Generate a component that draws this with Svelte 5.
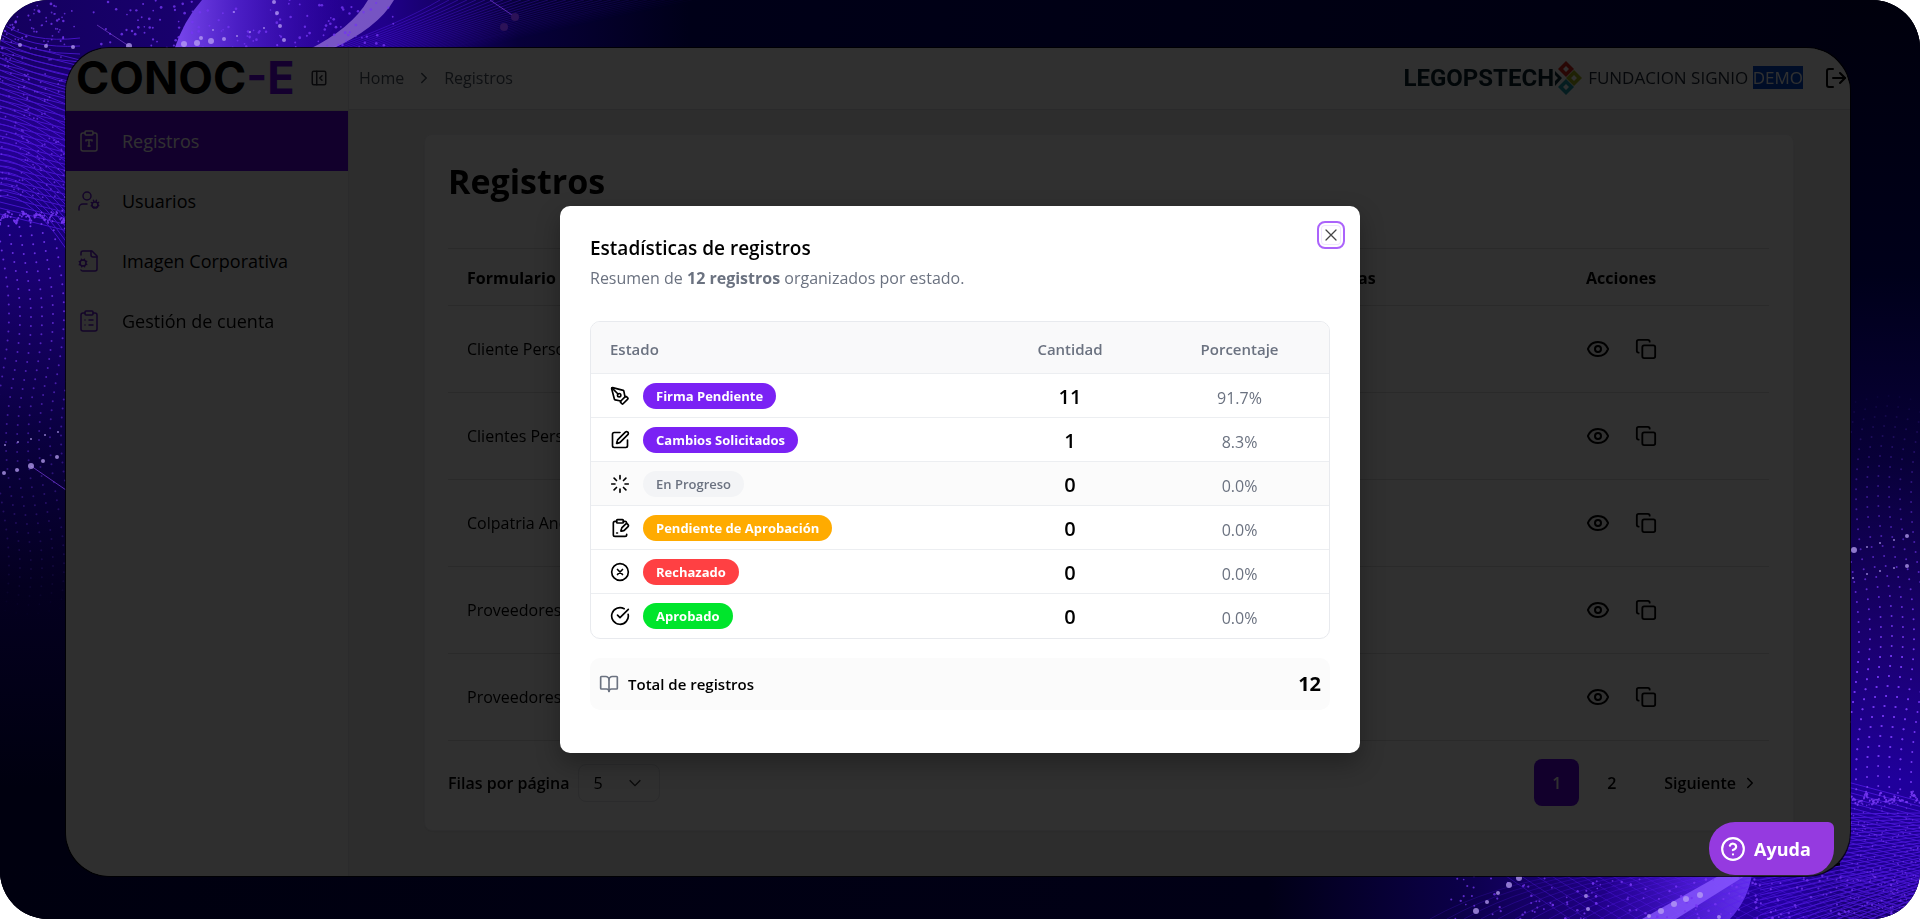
<script lang="ts">
  type Shape = string[];

  const icons: Record<string, Shape> = {
    registros: [
      "M9 2h6a1 1 0 0 1 1 1v2a1 1 0 0 1-1 1H9a1 1 0 0 1-1-1V3a1 1 0 0 1 1-1z",
      "M16 4h2a2 2 0 0 1 2 2v14a2 2 0 0 1-2 2H6a2 2 0 0 1-2-2V6a2 2 0 0 1 2-2h2",
      "M9 12v-1h6v1",
      "M11 17h2",
      "M12 11v6",
    ],
    usuarios: [
      "M6 7a4 4 0 1 0 8 0a4 4 0 1 0-8 0",
      "M10 15H6a4 4 0 0 0-4 4v2",
      "M15 16a3 3 0 1 0 6 0a3 3 0 1 0-6 0",
      "M21.7 16.4l-.9-.3M15.2 13.9l-.9-.3M16.6 18.7l.3-.9M19.1 12.2l.3-.9M19.6 18.7l-.4-1M16.8 12.3l-.4-1M14.3 16.6l1-.4M20.7 13.8l1-.4",
    ],
    imagen: [
      "M14 2v4a2 2 0 0 0 2 2h4",
      "M4 6V4a2 2 0 0 1 2-2h9l5 5v13a2 2 0 0 1-2 2H6a2 2 0 0 1-2-1",
      "M3 14a3 3 0 1 0 6 0a3 3 0 1 0-6 0",
      "M3.2 12.9l-.9-.3M9.7 15.4l-.9-.3M4.6 17.7l.3-.9M7.1 11.2l.3-.9M7.6 17.7l-.4-1M4.8 11.3l-.4-1M2.3 15.6l1-.4M8.7 12.8l1-.4",
    ],
    cuenta: [
      "M9 2h6a1 1 0 0 1 1 1v2a1 1 0 0 1-1 1H9a1 1 0 0 1-1-1V3a1 1 0 0 1 1-1z",
      "M16 4h2a2 2 0 0 1 2 2v14a2 2 0 0 1-2 2H6a2 2 0 0 1-2-2V6a2 2 0 0 1 2-2h2",
      "M12 11h4M12 16h4M8 11h.01M8 16h.01",
    ],
    panel: [
      "M5 3h14a2 2 0 0 1 2 2v14a2 2 0 0 1-2 2H5a2 2 0 0 1-2-2V5a2 2 0 0 1 2-2z",
      "M9 3v18",
      "m16 15-3-3 3-3",
    ],
    right: ["m9 18 6-6-6-6"],
    logout: ["M9 21H5a2 2 0 0 1-2-2V5a2 2 0 0 1 2-2h4", "m16 17 5-5-5-5", "M21 12H9"],
    eye: [
      "M2.06 12.35a1 1 0 0 1 0-.7 10.75 10.75 0 0 1 19.88 0 1 1 0 0 1 0 .7 10.75 10.75 0 0 1-19.88 0",
      "M9 12a3 3 0 1 0 6 0a3 3 0 1 0-6 0",
    ],
    copy: [
      "M10 8h10a2 2 0 0 1 2 2v10a2 2 0 0 1-2 2H10a2 2 0 0 1-2-2V10a2 2 0 0 1 2-2z",
      "M4 16c-1.1 0-2-.9-2-2V4c0-1.1.9-2 2-2h10c1.1 0 2 .9 2 2",
    ],
    pen: [
      "M15.7 21.3a1 1 0 0 1-1.4 0l-1.6-1.6a1 1 0 0 1 0-1.4l5.6-5.6a1 1 0 0 1 1.4 0l1.6 1.6a1 1 0 0 1 0 1.4z",
      "m18 13-1.4-6.9a1 1 0 0 0-.7-.8L3.2 2a1 1 0 0 0-1.2 1.2l3.3 12.7a1 1 0 0 0 .8.7L13 18",
      "m2.3 2.3 7.3 7.3",
      "M9 11a2 2 0 1 0 4 0a2 2 0 1 0-4 0",
    ],
    edit: [
      "M12 3H5a2 2 0 0 0-2 2v14a2 2 0 0 0 2 2h14a2 2 0 0 0 2-2v-7",
      "M18.4 2.6a1 1 0 0 1 3 3l-9 9a2 2 0 0 1-.9.5l-2.8.9a.5.5 0 0 1-.7-.7l.9-2.8a2 2 0 0 1 .5-.9z",
    ],
    loader: [
      "M12 2v4M16.2 7.8l2.9-2.9M18 12h4M16.2 16.2l2.9 2.9M12 18v4M4.9 19.1l2.9-2.9M2 12h4M4.9 4.9l2.9 2.9",
    ],
    clipPen: [
      "M9 2h6a1 1 0 0 1 1 1v2a1 1 0 0 1-1 1H9a1 1 0 0 1-1-1V3a1 1 0 0 1 1-1z",
      "M16 4h2a2 2 0 0 1 2 1.5M8 4H6a2 2 0 0 0-2 2v14a2 2 0 0 0 2 2h12a2 2 0 0 0 2-2v-.5",
      "M8 18h1",
      "M21.4 10.6a1 1 0 0 0-3-3l-4 4a2 2 0 0 0-.5.9l-.8 2.8a.5.5 0 0 0 .6.6l2.8-.8a2 2 0 0 0 .9-.5z",
    ],
    cross: ["M2 12a10 10 0 1 0 20 0a10 10 0 1 0-20 0", "m15 9-6 6M9 9l6 6"],
    check: ["M21.8 10A10 10 0 1 1 17 3.3", "m9 11 3 3L22 4"],
    book: [
      "M12 7v14",
      "M3 18a1 1 0 0 1-1-1V4a1 1 0 0 1 1-1h5a4 4 0 0 1 4 4 4 4 0 0 1 4-4h5a1 1 0 0 1 1 1v13a1 1 0 0 1-1 1h-6a3 3 0 0 0-3 3 3 3 0 0 0-3-3z",
    ],
    close: ["M18 6 6 18M6 6l12 12"],
    help: [
      "M2 12a10 10 0 1 0 20 0a10 10 0 1 0-20 0",
      "M9.1 9a3 3 0 0 1 5.8 1c0 2-3 3-3 3",
      "M12 17h.01",
    ],
  };

  const nav = [
    { label: "Registros", icon: "registros", active: true },
    { label: "Usuarios", icon: "usuarios", active: false },
    { label: "Imagen Corporativa", icon: "imagen", active: false },
    { label: "Gestión de cuenta", icon: "cuenta", active: false },
  ];

  const forms = ["Cliente Persona", "Clientes Persona", "Colpatria Andina", "Proveedores", "Proveedores"];

  const stats = [
    { label: "Firma Pendiente", icon: "pen", tone: "purple", count: 11 },
    { label: "Cambios Solicitados", icon: "edit", tone: "purple", count: 1 },
    { label: "En Progreso", icon: "loader", tone: "gray", count: 0 },
    { label: "Pendiente de Aprobación", icon: "clipPen", tone: "amber", count: 0 },
    { label: "Rechazado", icon: "cross", tone: "red", count: 0 },
    { label: "Aprobado", icon: "check", tone: "green", count: 0 },
  ];
  const total = stats.reduce((sum, s) => sum + s.count, 0);
  const percent = (n: number) => ((n / total) * 100).toFixed(1) + "%";

  let open = $state(true);
  let pageSize = $state("5");

  // seeded so the backdrop is the same on every load
  let seed = 7;
  function rnd() {
    seed = (seed * 16807) % 2147483647;
    return seed / 2147483647;
  }

  type Dot = { x: number; y: number; r: number; o: number };
  const dots: Dot[] = [];
  // left wave
  for (let y = 214; y < 690; y += 9)
    for (let x = 2; x < 72; x += 11)
      dots.push({ x: x + Math.sin(y / 40) * 7, y: y + Math.sin(x / 16) * 4, r: 1, o: Math.max(0, 1 - (y - 190) / 430) });
  // right wave
  for (let y = 400; y < 800; y += 10)
    for (let x = 1852; x < 1922; x += 11)
      dots.push({ x: x + Math.sin(y / 45) * 7, y: y + Math.sin(x / 16) * 4, r: 1, o: Math.min(1, (y - 380) / 280) });
  // crests where the dots meet the mesh
  for (let i = 0; i < 90; i++) {
    const t = rnd() * 70;
    const lift = Math.abs(Math.sin(t / 5)) * 9;
    dots.push({ x: t, y: 220 - lift + rnd() * 5, r: 1, o: 0.9 });
    dots.push({ x: 1850 + t, y: 796 + lift - rnd() * 5, r: 1, o: 0.9 });
  }
  for (let i = 0; i < 170; i++) {
    dots.push({ x: rnd() * 400, y: rnd() * 50, r: 0.8 + rnd() * 0.6, o: 0.8 });
    dots.push({ x: rnd() * 66, y: rnd() * 200, r: 0.9, o: 0.7 });
    dots.push({ x: 1450 + rnd() * 460, y: 876 + rnd() * 43, r: 0.8 + rnd() * 0.5, o: 0.75 });
    dots.push({ x: 1850 + rnd() * 70, y: 800 + rnd() * 110, r: 0.8, o: 0.7 });
  }
  const glows = [
    [129, 46, 3], [20, 45, 2], [46, 46, 2], [73, 47, 2], [184, 44, 3], [197, 43, 3], [211, 41, 3],
    [201, 38, 2], [213, 30, 1], [224, 39, 2], [237, 36, 1], [250, 32, 1], [264, 28, 1], [234, 12, 1],
    [31, 466, 3], [5, 445, 1], [18, 442, 1], [31, 439, 1], [45, 435, 1], [58, 432, 1], [17, 470, 2],
    [4, 473, 2], [43, 461, 2], [57, 457, 2], [1854, 550, 3], [1907, 536, 2], [1907, 566, 2],
    [1867, 547, 1], [1880, 543, 1], [1894, 540, 1], [1853, 578, 1], [1867, 574, 1], [1880, 571, 1],
    [1894, 568, 1], [1519, 878, 3], [1509, 885, 3], [1498, 893, 2], [1487, 902, 2], [1476, 911, 3],
    [1661, 911, 3], [1674, 904, 3], [1686, 899, 3], [1700, 895, 3], [1649, 916, 2], [1719, 917, 2],
    [1588, 909, 2], [1586, 896, 2], [274, 2, 2], [277, 13, 2], [280, 26, 2], [284, 40, 2],
  ];
  const lines = Array.from({ length: 30 }, (_, i) => i);
</script>

{#snippet icon(name: string, size: number, stroke = 2)}
  <svg
    class="icon"
    width={size}
    height={size}
    viewBox="0 0 24 24"
    fill="none"
    stroke="currentColor"
    stroke-width={stroke}
    stroke-linecap="round"
    stroke-linejoin="round"
    aria-hidden="true"
  >
    {#each icons[name] as d}
      <path {d} />
    {/each}
  </svg>
{/snippet}

<div class="stage">
  <svg class="backdrop" viewBox="0 0 1920 919" preserveAspectRatio="none" aria-hidden="true">
    <defs>
      <linearGradient id="top" x1="0" x2="1" y1="0" y2="0">
        <stop offset="0" stop-color="#14005e" />
        <stop offset="0.09" stop-color="#18006c" />
        <stop offset="0.13" stop-color="#2a0096" />
        <stop offset="0.2" stop-color="#20008a" />
        <stop offset="0.27" stop-color="#07003a" />
        <stop offset="0.36" stop-color="#000018" />
        <stop offset="1" stop-color="#00000e" />
      </linearGradient>
      <linearGradient id="left" x1="0" x2="0" y1="0" y2="1">
        <stop offset="0" stop-color="#14005e" />
        <stop offset="0.12" stop-color="#250094" />
        <stop offset="0.2" stop-color="#17007c" />
        <stop offset="0.27" stop-color="#190070" />
        <stop offset="0.45" stop-color="#0a0040" />
        <stop offset="0.62" stop-color="#040020" />
        <stop offset="0.85" stop-color="#00000f" />
      </linearGradient>
      <linearGradient id="right" x1="0" x2="0" y1="0" y2="1">
        <stop offset="0" stop-color="#00000c" />
        <stop offset="0.3" stop-color="#00001a" />
        <stop offset="0.5" stop-color="#080038" />
        <stop offset="0.7" stop-color="#1a0070" />
        <stop offset="0.85" stop-color="#20009c" />
        <stop offset="0.95" stop-color="#1f0090" />
        <stop offset="1" stop-color="#16006a" />
      </linearGradient>
      <linearGradient id="bottom" x1="0" x2="1" y1="0" y2="0">
        <stop offset="0" stop-color="#00000f" />
        <stop offset="0.66" stop-color="#010016" />
        <stop offset="0.76" stop-color="#0b0048" />
        <stop offset="0.84" stop-color="#21008a" />
        <stop offset="0.93" stop-color="#2400a0" />
        <stop offset="0.96" stop-color="#1b0080" />
        <stop offset="1" stop-color="#1b0080" />
      </linearGradient>
      <linearGradient id="beam" x1="0" x2="1" y1="0" y2="0">
        <stop offset="0" stop-color="#7a48ee" />
        <stop offset="0.35" stop-color="#5022cc" stop-opacity="0.9" />
        <stop offset="1" stop-color="#3208b0" stop-opacity="0" />
      </linearGradient>
      <linearGradient id="beam-back" x1="1" x2="0" y1="0" y2="0">
        <stop offset="0" stop-color="#6634ee" />
        <stop offset="0.4" stop-color="#4a1ad0" stop-opacity="0.9" />
        <stop offset="1" stop-color="#3208b0" stop-opacity="0" />
      </linearGradient>
    </defs>
    <rect width="1920" height="919" fill="#00000f" />
    <rect y="40" width="80" height="879" fill="url(#left)" />
    <rect width="1920" height="60" fill="url(#top)" />
    <rect y="866" width="1920" height="53" fill="url(#bottom)" />
    <rect x="1840" width="80" height="919" fill="url(#right)" />

    <path d="M174 50Q184 20 202 0H350L320 50Z" fill="url(#beam)" />
    <path d="M1590 919L1620 874H1752Q1748 900 1730 919Z" fill="url(#beam-back)" />

    <g class="mesh">
      {#each lines as i}
        <path d="M0 {40 + i * 6}L80 {60 + i * 6}" />
        <path d="M0 {22 + i * 6}Q30 {44 + i * 5} 80 {38 + i * 8}" />
        <path d="M{320 + i * 5} 52Q{400 + i * 6} 24 {440 + i * 9} 0" opacity={0.6 - i / 50} />
        <path d="M1840 {780 + i * 5}L1930 {804 + i * 5}" />
        <path d="M1760 {960 - i * 5}L1920 {900 - i * 3}" />
        <path d="M{1430 + i * 17} 919Q{1490 + i * 17} 885 {1580 + i * 17} 872" opacity={0.3 + i / 50} />
        <path d="M{1500 + i * 15} 872L{1570 + i * 17} 919" opacity="0.5" />
      {/each}
    </g>

    <path d="M308 50Q352 28 368 0H394Q378 28 330 50Z" fill="#9b78dc" opacity="0.7" />
    <path d="M1642 919L1722 874H1748L1676 919Z" fill="#8858ff" opacity="0.8" />
    <path class="link" d="M490 0L515 17M31 466L66 490M97 25L129 46" />

    <g fill="#7436f2">
      {#each dots as d}
        <circle cx={d.x} cy={d.y} r={d.r} opacity={d.o} />
      {/each}
    </g>
    <g fill="#b9a0f4" opacity="0.75">
      {#each glows as [x, y, r]}
        <circle cx={x} cy={y} {r} />
      {/each}
    </g>
    <circle cx="515" cy="17" r="4" fill="#2c1258" />
    <circle cx="504" cy="27" r="4" fill="#2c1258" />
  </svg>

  <div class="window">
    <div class="app">
      <aside class="sidebar">
        <div class="brand">
          <span class="logo">CONOC<span class="logo-accent">-E</span></span>
          <button class="bare" type="button" aria-label="Contraer menú">{@render icon("panel", 18)}</button>
        </div>
        <nav>
          {#each nav as item}
            <a class="nav-item" class:active={item.active} href="#{item.icon}">
              {@render icon(item.icon, 24, 1.5)}
              <span>{item.label}</span>
            </a>
          {/each}
        </nav>
      </aside>

      <div class="content">
        <header class="topbar">
          <div class="crumbs">
            <a href="#home">Home</a>
            {@render icon("right", 18)}
            <a href="#registros">Registros</a>
          </div>
          <div class="account">
            <span class="partner">
              <span>LEGOPSTECH</span>
              <svg width="28" height="34" viewBox="0 0 28 34" aria-hidden="true">
                <path d="M1 10l7 7-7 8v-5l3-3-3-3z" fill="#0c2b38" />
                <path d="M12 0l8 8-8 8-8-8zM12 5l-3 3 3 3 3-3z" fill="#d8281e" fill-rule="evenodd" />
                <path d="M20 9l8 8-8 8-8-8zM20 14l-3 3 3 3 3-3z" fill="#a6b41c" fill-rule="evenodd" />
                <path d="M12 18l8 8-8 8-8-8zM12 23l-3 3 3 3 3-3z" fill="#1e9aac" fill-rule="evenodd" />
              </svg>
            </span>
            <span class="company">FUNDACION SIGNIO <mark>DEMO</mark></span>
            <button class="bare" type="button" aria-label="Cerrar sesión">{@render icon("logout", 24)}</button>
          </div>
        </header>

        <main>
          <section class="card">
            <h1>Registros</h1>
            <table class="forms">
              <thead>
                <tr>
                  <th>Formulario</th>
                  <th class="col-answers">Respuestas</th>
                  <th class="col-actions">Acciones</th>
                </tr>
              </thead>
              <tbody>
                {#each forms as form}
                  <tr>
                    <td>{form}</td>
                    <td></td>
                    <td>
                      <div class="actions">
                        <button class="bare" type="button" aria-label="Ver">{@render icon("eye", 24)}</button>
                        <button class="bare" type="button" aria-label="Copiar">{@render icon("copy", 22)}</button>
                      </div>
                    </td>
                  </tr>
                {/each}
              </tbody>
            </table>

            <div class="pager">
              <label for="rows">Filas por página</label>
              <select id="rows" bind:value={pageSize}>
                <option>5</option>
                <option>10</option>
                <option>20</option>
              </select>
              <div class="pages">
                <button class="page current" type="button">1</button>
                <button class="page" type="button">2</button>
                <button class="next" type="button">Siguiente {@render icon("right", 18)}</button>
              </div>
            </div>
          </section>
        </main>
      </div>
    </div>

    {#if open}
      <div class="overlay">
        <div class="dialog" role="dialog" aria-modal="true" aria-labelledby="stats-title">
          <button class="close" type="button" aria-label="Cerrar" onclick={() => (open = false)}>
            {@render icon("close", 20, 1.5)}
          </button>
          <h2 id="stats-title">Estadísticas de registros</h2>
          <p class="summary">
            Resumen de <strong>{total} registros</strong> organizados por estado.
          </p>

          <div class="stats-box">
            <table class="stats">
              <thead>
                <tr>
                  <th class="state">Estado</th>
                  <th class="count">Cantidad</th>
                  <th class="share">Porcentaje</th>
                </tr>
              </thead>
              <tbody>
                {#each stats as s}
                  <tr class:muted={s.tone === "gray"}>
                    <td class="state">
                      <div class="state-cell">
                        {@render icon(s.icon, 20)}
                        <span class="badge {s.tone}">{s.label}</span>
                      </div>
                    </td>
                    <td class="count">{s.count}</td>
                    <td class="share">{percent(s.count)}</td>
                  </tr>
                {/each}
              </tbody>
            </table>
          </div>

          <div class="total">
            {@render icon("book", 20)}
            <span>Total de registros</span>
            <strong>{total}</strong>
          </div>
        </div>
      </div>
    {/if}

    <button class="help" type="button">
      {@render icon("help", 26)}
      Ayuda
    </button>
  </div>
</div>

<style>
  :global(body) {
    background: #fff;
  }

  .stage {
    position: relative;
    box-sizing: border-box;
    min-height: 100vh;
    padding: 48px 70px 43px 66px;
    display: flex;
    border-radius: 48px;
    overflow: hidden;
    font-family: "Open Sans", "Segoe UI", sans-serif;
    font-size: 16px;
    line-height: 24px;
    color: #000;
  }
  .stage *,
  .stage *::before {
    box-sizing: border-box;
  }

  .backdrop {
    position: absolute;
    inset: 0;
    width: 100%;
    height: 100%;
  }
  .mesh {
    fill: none;
    stroke: #5a1cf0;
    stroke-width: 1;
    opacity: 0.7;
  }
  .link {
    fill: none;
    stroke: #5a2cb0;
    stroke-width: 1;
  }

  .icon {
    display: block;
    flex: none;
  }

  button,
  select {
    font: inherit;
    color: inherit;
    cursor: pointer;
  }
  .bare {
    display: block;
    padding: 0;
    border: 0;
    background: none;
  }
  a {
    color: inherit;
    text-decoration: none;
  }

  .window {
    position: relative;
    flex: 1;
    display: flex;
  }
  .app {
    flex: 1;
    display: flex;
    border-radius: 44px;
    overflow: hidden;
    background: #f0f0f0;
  }

  /* ── Sidebar ── */
  .sidebar {
    flex: none;
    width: 283px;
    border-right: 1px solid #e2e2e6;
    background: #f6f6f6;
  }
  .brand {
    display: flex;
    align-items: center;
    justify-content: space-between;
    height: 63px;
    padding: 0 20px 2px 10px;
    border-bottom: 1px solid #e6e6e8;
    color: #30343a;
  }
  .logo {
    font-family: Inter, sans-serif;
    font-size: 45px;
    font-weight: 700;
    line-height: 56px;
    color: #000;
  }
  .logo-accent {
    color: #6a00f4;
  }
  .nav-item {
    display: flex;
    align-items: center;
    gap: 21px;
    height: 60px;
    padding: 0 11px;
    font-size: 18px;
  }
  .nav-item .icon {
    color: #6a1bd8;
  }
  .nav-item.active,
  .nav-item.active .icon {
    color: #fff;
  }
  .nav-item.active {
    background: #6000ea;
  }

  /* ── Top bar ── */
  .content {
    flex: 1;
    min-width: 0;
    display: flex;
    flex-direction: column;
  }
  .topbar {
    display: flex;
    align-items: center;
    justify-content: space-between;
    height: 62px;
    padding: 0 2px 2px 10px;
    border-bottom: 1px solid #e0e0e4;
    background: #fcfcfc;
  }
  .crumbs {
    display: flex;
    align-items: center;
    gap: 11px;
    color: #4b5563;
  }
  .account {
    display: flex;
    align-items: center;
  }
  .partner {
    display: flex;
    align-items: center;
    margin-right: 6px;
    font-family: Roboto, sans-serif;
    font-size: 24px;
    font-weight: 700;
    color: #06222e;
  }
  .company {
    margin-right: 21px;
    font-size: 17px;
    color: #1f2937;
  }
  mark {
    background: #0048cc;
    color: #fff;
  }

  /* ── Records card ── */
  main {
    padding: 24px 56px 24px 75px;
  }
  .card {
    padding: 24px 24px 24px 23px;
    border: 1px solid #efeff2;
    border-radius: 8px;
    background: #fcfcfc;
    box-shadow: 0 1px 3px rgba(0, 0, 0, 0.12);
  }
  h1 {
    margin: 0 0 45px;
    font-size: 34px;
    line-height: 44px;
    font-weight: 700;
  }
  .forms {
    width: 100%;
    table-layout: fixed;
    border-collapse: collapse;
    text-align: left;
  }
  .forms tr {
    border-bottom: 1px solid #dcdce0;
  }
  .forms thead tr {
    border-top: 1px solid #dcdce0;
  }
  .forms th {
    height: 57px;
    padding: 2px 19px 0;
    font-weight: 700;
  }
  .forms td {
    height: 87px;
    padding: 0 19px;
  }
  .col-answers {
    width: 301px;
  }
  .col-actions {
    width: 202px;
  }
  .actions {
    display: flex;
    align-items: center;
    gap: 25px;
  }

  .pager {
    display: flex;
    align-items: center;
    gap: 9px;
    margin-top: 18px;
    font-weight: 600;
  }
  select {
    width: 82px;
    height: 38px;
    padding: 0 14px;
    border: 1px solid #e2e4e8;
    border-radius: 8px;
    appearance: none;
    background: url("data:image/svg+xml;utf8,<svg xmlns='http://www.w3.org/2000/svg' width='16' height='16' viewBox='0 0 24 24' fill='none' stroke='%23333' stroke-width='2'><path d='m4 8 8 8 8-8'/></svg>")
      no-repeat right 16px center;
    font-weight: 400;
  }
  .pages {
    display: flex;
    align-items: center;
    margin-left: auto;
    padding-right: 10px;
  }
  .page {
    width: 45px;
    height: 47px;
    margin-right: 10px;
    padding: 0;
    border: 0;
    border-radius: 8px;
    background: none;
  }
  .page.current {
    background: #6000ea;
    color: #fff;
  }
  .next {
    display: flex;
    align-items: center;
    gap: 5px;
    margin-left: 20px;
    padding: 0;
    border: 0;
    background: none;
  }

  /* ── Statistics dialog ── */
  .overlay {
    position: absolute;
    /* one pixel over the window's edge, so no light rim shows at the corners */
    inset: -1px;
    display: flex;
    align-items: center;
    justify-content: center;
    padding: 34px 0 0 4px;
    border-radius: 44px;
    background: rgba(0, 0, 0, 0.81);
  }
  .dialog {
    position: relative;
    width: 800px;
    max-width: 100%;
    padding: 30px 30px 43px;
    border-radius: 10px;
    background: #fff;
    box-shadow: 0 10px 24px rgba(0, 0, 0, 0.3);
  }
  .close {
    position: absolute;
    top: 15px;
    right: 15px;
    display: grid;
    place-items: center;
    width: 28px;
    height: 28px;
    padding: 0;
    border: 2px solid #ab63fb;
    border-radius: 8px;
    background: #fff;
    box-shadow: inset 0 0 0 2px #fff, inset 0 0 0 3px #f0e6fe;
    color: #444;
  }
  h2 {
    margin: 0;
    font-size: 19px;
    line-height: 24px;
    font-weight: 600;
  }
  .summary {
    margin: 6px 0 31px;
    color: #6b7280;
  }
  .stats-box {
    border: 1px solid #e8eaee;
    border-radius: 10px;
    overflow: hidden;
  }
  .stats {
    width: 100%;
    table-layout: fixed;
    border-collapse: collapse;
  }
  .stats th {
    height: 52px;
    padding: 3px 0 0;
    background: #f9f9fa;
    font-size: 15px;
    font-weight: 600;
    color: #6b7280;
  }
  .stats td {
    height: 44px;
    padding: 0;
    border-top: 1px solid #eceef1;
  }
  .stats .state {
    padding-left: 19px;
    text-align: left;
  }
  .stats .count {
    width: 160px;
    text-align: center;
  }
  .stats .share {
    width: 179px;
    text-align: center;
  }
  .stats td.count {
    padding-top: 3px;
    font-size: 20px;
    font-weight: 600;
  }
  .stats td.share {
    padding-top: 5px;
    color: #6b7280;
  }
  .stats tr.muted {
    background: #fbfbfb;
  }
  .state-cell {
    display: flex;
    align-items: center;
    gap: 13px;
  }
  .badge {
    padding: 1px 13px;
    border-radius: 13px;
    font-size: 13px;
    font-weight: 700;
    color: #fff;
  }
  .badge.purple {
    background: #7a22f4;
  }
  .badge.gray {
    background: #f3f4f6;
    font-weight: 600;
    color: #6b7280;
  }
  .badge.amber {
    background: #ffab00;
  }
  .badge.red {
    background: #ff4043;
  }
  .badge.green {
    background: #00e52c;
  }
  .total {
    display: flex;
    align-items: center;
    gap: 9px;
    height: 52px;
    margin-top: 19px;
    padding: 0 9px;
    border-radius: 10px;
    background: #fbfbfb;
    font-size: 15px;
    font-weight: 600;
  }
  .total .icon {
    color: #6b7280;
  }
  .total strong {
    margin-left: auto;
    font-size: 20px;
    font-weight: 700;
  }

  /* ── Help ── */
  .help {
    position: absolute;
    right: 16px;
    bottom: 1px;
    display: flex;
    align-items: center;
    gap: 8px;
    width: 125px;
    height: 53px;
    padding: 0 11px;
    border: 0;
    border-radius: 26px 6px 26px 26px;
    background: #953ae0;
    font-size: 18px;
    font-weight: 700;
    color: #fff;
  }
</style>
